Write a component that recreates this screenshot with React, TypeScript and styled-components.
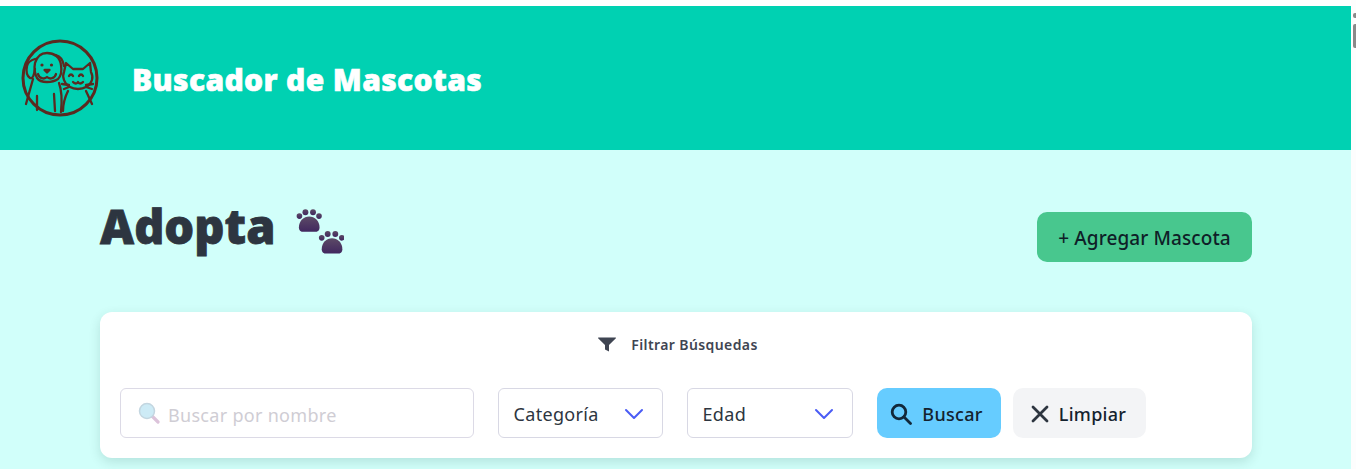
import React from "react";
import styled, { createGlobalStyle } from "styled-components";

const Global = createGlobalStyle`
  html, body { margin: 0; padding: 0; height: 469px; overflow: hidden; background: #fff; }
  body { font-family: "Noto Sans", "Open Sans", "Liberation Sans", sans-serif; }
  #root { height: 469px; }
  * { box-sizing: border-box; }
`;

const Window = styled.div`
  display: flex;
  height: 469px;
  width: 1356px;
  overflow: hidden;
`;

const Page = styled.div`
  width: 1351px;
  flex: none;
  padding-top: 6px;
  display: flex;
  flex-direction: column;
`;

const ScrollTrack = styled.div`
  width: 5px;
  flex: none;
  background: #fdfdfd;
  display: flex;
  flex-direction: column;
  align-items: flex-end;
  padding-top: 13px;
  gap: 6px;
`;

const ScrollArrow = styled.div`
  width: 3px;
  height: 5px;
  background: #8a8a8a;
  border-radius: 2px 0 0 2px;
`;

const ScrollThumb = styled.div`
  width: 3px;
  height: 24px;
  background: #8a8a8a;
  border-radius: 2px 0 0 2px;
`;

const Header = styled.header`
  height: 144px;
  flex: none;
  background: #00d1b2;
  display: flex;
  align-items: center;
  padding: 0 0 0 18px;
`;

const Logo = styled.svg`
  width: 84px;
  height: 84px;
  flex: none;
`;

const Brand = styled.h1`
  margin: 4px 0 0 30px;
  font-family: "Open Sans", sans-serif;
  font-size: 30px;
  font-weight: 800;
  line-height: 38px;
  color: #fff;
  letter-spacing: 0.35px;
  -webkit-text-stroke: 0.6px #fff;
`;

const Main = styled.main`
  flex: 1;
  background: #d1fffa;
  padding: 0 99px 0 100px;
  display: flex;
  flex-direction: column;
`;

const TitleRow = styled.div`
  display: flex;
  justify-content: space-between;
  align-items: flex-start;
  height: 162px;
`;

const TitleGroup = styled.div`
  display: flex;
  align-items: flex-start;
  gap: 19px;
  padding-top: 46px;
`;

const Title = styled.h2`
  margin: 0;
  font-family: "Open Sans", sans-serif;
  font-size: 47px;
  font-weight: 800;
  line-height: 60px;
  color: #2d3540;
  -webkit-text-stroke: 0.8px #2d3540;
`;

const Paws = styled.svg`
  width: 50px;
  height: 50px;
  flex: none;
  margin-top: 13px;
`;

const AddButton = styled.button`
  margin-top: 62px;
  width: 215px;
  height: 50px;
  border: none;
  border-radius: 10px;
  background: #48c78e;
  color: #0f1f28;
  font: 500 19px/24px "Noto Sans", sans-serif;
  letter-spacing: 0.1px;
  padding: 1px 0 0;
  display: flex;
  align-items: center;
  justify-content: center;
`;

const Card = styled.section`
  height: 146px;
  flex: none;
  background: #fff;
  border-radius: 12px;
  padding: 20px 20px;
  box-shadow: 0 4px 12px rgba(0, 60, 50, 0.14);
  display: flex;
  flex-direction: column;
`;

const FilterHead = styled.div`
  height: 24px;
  display: flex;
  align-items: center;
  justify-content: center;
  gap: 15px;
  padding-left: 4px;
  color: #3f4552;
  font-size: 14px;
  font-weight: 600;
  letter-spacing: 0.4px;
`;

const Controls = styled.div`
  margin-top: 32px;
  display: flex;
  align-items: stretch;
  height: 50px;
`;

const SearchField = styled.label`
  width: 354px;
  border: 1px solid #dcdae6;
  border-radius: 6px;
  display: flex;
  align-items: center;
  padding-left: 17px;
  gap: 8px;
  margin-right: 24px;
`;

const SearchInput = styled.input`
  flex: 1;
  min-width: 0;
  border: none;
  outline: none;
  background: transparent;
  font: 400 18px/24px "Noto Sans", sans-serif;
  letter-spacing: 0.3px;
  color: #333;
  padding: 3px 0 0;
  &::placeholder { color: #cfcdd4; opacity: 1; }
`;

const SelectBox = styled.div<{ $w: number }>`
  width: ${(p) => p.$w}px;
  border: 1px solid #d8d8e4;
  border-radius: 6px;
  display: flex;
  align-items: center;
  justify-content: space-between;
  padding: 1px 18px 0 14.5px;
  margin-right: 24px;
  color: #2d3540;
  font-size: 18px;
  letter-spacing: 0.33px;
`;

const ActionButton = styled.button<{ $bg: string; $w: number; $shift: number }>`
  width: ${(p) => p.$w}px;
  border: none;
  border-radius: 10px;
  background: ${(p) => p.$bg};
  color: #14222e;
  font: 500 18px/24px "Noto Sans", sans-serif;
  letter-spacing: 0.3px;
  display: flex;
  align-items: center;
  justify-content: center;
  gap: 10px;
  margin-right: 12px;
  padding: 1px ${(p) => p.$shift}px 0 0;
`;

const Chevron = () => (
  <svg width="20" height="12" viewBox="0 0 20 12" fill="none" stroke="#4a5cf5" strokeWidth="2" strokeLinecap="round" strokeLinejoin="round">
    <path d="M2 2l8 8 8-8" />
  </svg>
);

export default function App() {
  return (
    <Window>
      <Global />
      <Page>
        <Header>
          <Logo viewBox="0 0 84 84" fill="none" stroke="#5a2a20" strokeWidth="2.300" strokeLinecap="round" strokeLinejoin="round">
            <circle cx="42" cy="42" r="37" strokeWidth="3" />
            <path d="M17 27C19 20 24 17 29 17c7 0 13 4 14 12 1 6 0 11-3 14-3 2-7 3-11 3-4 0-8-1-10-4-2-4-3-10-2-15z" />
            <path d="M17 23c-4 1-7 3-8 7-1 5 0 10 3 12 3 1 4-3 5-9" />
            <path d="M38 19c4 1 7 5 8 11" />
            <circle cx="24" cy="29" r="1.600" fill="#5a2a20" stroke="none" />
            <circle cx="33.500" cy="29" r="1.600" fill="#5a2a20" stroke="none" />
            <path d="M26.500 34h5l-2.500 2.500z" fill="#5a2a20" />
            <path d="M20 38c1 4 6 6 9 3 3 3 8 1 9-3" />
            <path d="M15 43L8 68" />
            <path d="M19 60v14M36 58l1 17M41 47c3 8 3 19 2 29" />
            <path d="M48 27l-2 9c-1 2-1 5 0 8 2 6 8 9 14 9s12-3 14-9c1-3 0-6-1-8l-1-9-7 6H55z" />
            <path d="M51 40c1-2 3-2 4 0M61 40c1-2 3-2 4 0" />
            <path d="M55 46c2 2 4 2 5 0 1 2 3 2 5 0" />
            <path d="M44 48l7 1M46 53l5-2M68 49l7-1M68 51l6 2" />
            <path d="M50 55c-3 6-5 13-5 20M68 55l6 13" />
          </Logo>
          <Brand>Buscador de Mascotas</Brand>
        </Header>
        <Main>
          <TitleRow>
            <TitleGroup>
              <Title>Adopta</Title>
              <Paws viewBox="0 0 46 46">
                <defs>
                  <linearGradient id="pawFill" x1="0" y1="0" x2="0" y2="1">
                    <stop offset="0" stopColor="#5c4a66" />
                    <stop offset="1" stopColor="#41285f" />
                  </linearGradient>
                </defs>
                <g fill="url(#pawFill)">
                  <circle cx="5" cy="6.500" r="2.600" />
                  <circle cx="10.500" cy="3" r="2.700" />
                  <circle cx="17.500" cy="3" r="2.700" />
                  <circle cx="23" cy="6.500" r="2.600" />
                  <path d="M4.500 17c0-6 4.500-10 9.500-10s9.500 4 9.500 10c0 3-2 4-4 4h-11c-2 0-4-1-4-4z" />
                  <circle cx="25.500" cy="26.500" r="2.600" />
                  <circle cx="31" cy="23" r="2.700" />
                  <circle cx="38" cy="23" r="2.700" />
                  <circle cx="44" cy="26.500" r="2.600" />
                  <path d="M25.500 37c0-6 4.500-10 9.500-10s9.500 4 9.500 10c0 3-2 4-4 4h-11c-2 0-4-1-4-4z" />
                </g>
              </Paws>
            </TitleGroup>
            <AddButton>+ Agregar Mascota</AddButton>
          </TitleRow>
          <Card>
            <FilterHead>
              <svg width="18" height="15" viewBox="0 0 18 15" fill="#3f4552">
                <path d="M0.500 0.500h17a.5.5 0 0 1 .4.800L11 8v6.500l-4-2V8L.100 1.300a.5.5 0 0 1 .4-.800z" />
              </svg>
              Filtrar Búsquedas
            </FilterHead>
            <Controls>
              <SearchField>
                <svg width="22" height="22" viewBox="0 0 22 22" fill="none">
                  <path d="M14 14l6 6" stroke="#dcc3da" strokeWidth="3.200" strokeLinecap="round" />
                  <circle cx="9" cy="9" r="7.500" fill="#cdebf6" stroke="#c3d6e0" strokeWidth="1.500" />
                </svg>
                <SearchInput placeholder="Buscar por nombre" />
              </SearchField>
              <SelectBox $w={165}>
                Categoría
                <Chevron />
              </SelectBox>
              <SelectBox $w={166}>
                Edad
                <Chevron />
              </SelectBox>
              <ActionButton $bg="#66ccff" $w={124} $shift={5}>
                <svg width="22" height="22" viewBox="0 0 22 22" fill="none" stroke="#12283a" strokeWidth="2.800" strokeLinecap="round">
                  <circle cx="9" cy="9" r="6.800" />
                  <path d="M14 14l6.500 6.500" />
                </svg>
                Buscar
              </ActionButton>
              <ActionButton $bg="#f3f4f6" $w={133} $shift={2}>
                <svg width="18" height="18" viewBox="0 0 18 18" fill="none" stroke="#2d3540" strokeWidth="2.800" strokeLinecap="round">
                  <path d="M2 2l14 14M16 2L2 16" />
                </svg>
                Limpiar
              </ActionButton>
            </Controls>
          </Card>
        </Main>
      </Page>
      <ScrollTrack>
        <ScrollArrow />
        <ScrollThumb />
      </ScrollTrack>
    </Window>
  );
}
